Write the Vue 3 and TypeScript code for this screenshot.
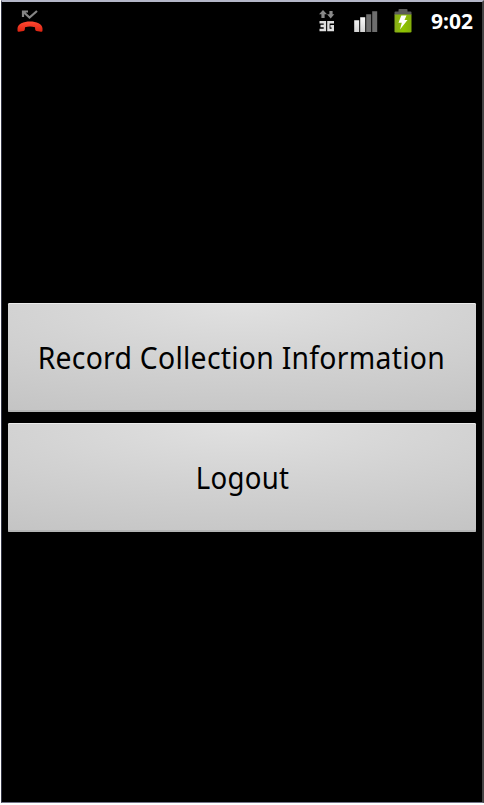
<script setup lang="ts">
interface Action {
  id: string
  label: string
}

const actions: Action[] = [
  { id: 'record', label: 'Record Collection Information' },
  { id: 'logout', label: 'Logout' },
]
const time = '9:02'
</script>

<template>
  <div class="frame">
    <main class="screen">
      <header class="status">
        <svg class="missed" width="28" height="24" viewBox="0 0 28 24" aria-label="Missed call">
          <path d="M7 7V1.5H12M7.5 2L13.5 7.5L21 1" fill="none" stroke="#858585" stroke-width="2.2" />
          <path
            d="M1.5 18.5C1.5 9 26.5 9 26.5 18.5V20.5Q26.5 22 25 21.7L20.5 21Q19.3 20.8 19.2 19.5L19 17.3Q14 15.7 9 17.3L8.8 19.5Q8.7 20.8 7.5 21L3 21.7Q1.5 22 1.5 20.5Z"
            fill="url(#phone)"
          />
          <defs>
            <linearGradient id="phone" x1="0" y1="0" x2="0" y2="1">
              <stop offset="0" stop-color="#ff4932" />
              <stop offset="1" stop-color="#dc2412" />
            </linearGradient>
          </defs>
        </svg>
        <svg class="data" width="16" height="24" viewBox="0 0 16 24" aria-label="3G data">
          <path d="M4 1L8 5.3H5.6V9H2.4V5.3H0ZM10.4 2H13.6V5.3H15.3L11.7 9.5L8 5.3H10.4Z" fill="#8a8a8a" />
          <path
            d="M0.5 13.2H5.9V21H0.5M1.5 17H5.9M15 13.2H9.4V21H13.8V17.2H11.4"
            fill="none"
            stroke="#dedede"
            stroke-width="2.4"
          />
        </svg>
        <svg class="signal" width="24" height="22" viewBox="0 0 24 22" aria-label="Signal">
          <path d="M0.2 10.2h5v11.8h-5zM6.2 7.2h5v14.8h-5z" fill="url(#bars)" />
          <path d="M12.2 4.2h5v17.8h-5zM18.2 1.2h5v20.8h-5z" fill="#6e6e6e" />
          <defs>
            <linearGradient id="bars" x1="0" y1="0" x2="0" y2="1">
              <stop offset="0" stop-color="#fafafa" />
              <stop offset="1" stop-color="#d4d4d4" />
            </linearGradient>
          </defs>
        </svg>
        <svg class="battery" width="18" height="24" viewBox="0 0 18 24" aria-label="Battery charging">
          <path d="M0.5 6V3.5Q0.5 2.5 1.5 2.5H4.5V0.8Q4.5 0 5.3 0H12.7Q13.5 0 13.5 0.8V2.5H16.5Q17.5 2.5 17.5 3.5V6Z" fill="#5b5b5b" />
          <path d="M0.5 5.5H17.5V22.2Q17.5 23.5 16.2 23.5H1.8Q0.5 23.5 0.5 22.2Z" fill="url(#charge)" />
          <path d="M7.3 6.5H12.5L10.5 11H13.5L6 20.5L7.8 13.7H4.5Z" fill="#fff" />
          <defs>
            <linearGradient id="charge" x1="0" y1="0" x2="1" y2="0">
              <stop offset="0" stop-color="#86a91b" />
              <stop offset="0.5" stop-color="#8fc500" />
              <stop offset="1" stop-color="#84ad0c" />
            </linearGradient>
          </defs>
        </svg>
        <time class="clock">{{ time }}</time>
      </header>
      <nav class="actions">
        <button v-for="action in actions" :key="action.id" type="button" class="action">
          <span class="label" :class="action.id">{{ action.label }}</span>
        </button>
      </nav>
    </main>
  </div>
</template>

<style>
body {
  background: #fff;
}
</style>

<style scoped>
.frame {
  box-sizing: border-box;
  height: 805px;
  padding: 0 0 2px 1px;
  background: #fff;
  font-family: 'Noto Sans', 'Open Sans', sans-serif;
}
.screen {
  box-sizing: border-box;
  display: flex;
  flex-direction: column;
  height: 803px;
  border-top: 2px solid #b4b7c8;
  border-right: 2px solid #444;
  border-bottom: 1px solid #747588;
  border-left: 1px solid #343647;
  background: #000;
}
.status {
  display: flex;
  flex: none;
  align-items: flex-start;
  height: 38px;
}
.missed {
  margin: 8px 0 0 14px;
}
.data {
  margin: 7px 0 0 275px;
}
.signal {
  margin: 8px 0 0 19px;
}
.battery {
  margin: 7px 0 0 16px;
}
.clock {
  margin: 5px 0 0 19px;
  color: #fff;
  font-size: 21px;
  font-weight: 700;
  line-height: 28px;
  white-space: nowrap;
}
.actions {
  display: flex;
  flex-direction: column;
  gap: 11px;
  padding: 263px 6px 0;
}
.action {
  display: flex;
  align-items: center;
  justify-content: center;
  height: 109px;
  margin: 0;
  padding: 0;
  border: 0;
  border-radius: 1.5px;
  background: radial-gradient(ellipse 115% 125% at 50% 0, #e1e1e1 0%, #d2d2d2 45%, #c4c4c4 90%);
  box-shadow: inset 0 1px #ececec, inset 0 -2px #b4b5b5;
  color: #000;
  font-family: inherit;
}
.label {
  font-size: 31px;
  line-height: 42px;
  letter-spacing: 0.3px;
  white-space: nowrap;
}
.record {
  transform: translate(-0.5px, -1px) scaleX(0.914);
}
.logout {
  transform: translateY(-1px) scaleX(0.89);
}
</style>
